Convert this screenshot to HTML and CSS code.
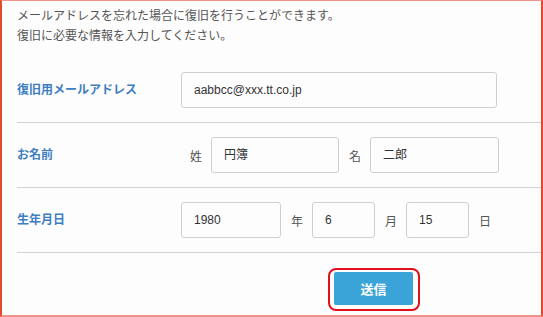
FILE: index.html
```html
<!DOCTYPE html>
<html lang="ja">
<head>
<meta charset="utf-8">
<title>復旧</title>
<link rel="stylesheet" href="styles.css">
</head>
<body>
<div class="frame">
  <div class="intro">
    <p>メールアドレスを忘れた場合に復旧を行うことができます。</p>
    <p>復旧に必要な情報を入力してください。</p>
  </div>
  <div class="row">
    <div class="label">復旧用メールアドレス</div>
    <div class="controls">
      <div class="field w-email">aabbcc@xxx.tt.co.jp</div>
    </div>
  </div>
  <div class="row">
    <div class="label">お名前</div>
    <div class="controls">
      <span class="unit lead">姓</span>
      <div class="field w-name1">円簿</div>
      <span class="unit">名</span>
      <div class="field w-name2">二郎</div>
    </div>
  </div>
  <div class="row">
    <div class="label">生年月日</div>
    <div class="controls">
      <div class="field w-year">1980</div>
      <span class="unit">年</span>
      <div class="field w-md">6</div>
      <span class="unit">月</span>
      <div class="field w-md">15</div>
      <span class="unit">日</span>
    </div>
  </div>
  <div class="actions">
    <span class="highlight"><button class="submit" type="button">送信</button></span>
  </div>
</div>
</body>
</html>
```

FILE: styles.css
```css
* { box-sizing: border-box; }
html, body {
  margin: 0;
  padding: 0;
  background: #fdfdfd;
}
body {
  font-family: "Liberation Sans", "Noto Sans CJK JP", sans-serif;
  font-size: 12px;
  color: #555;
}
.frame {
  width: 543px;
  height: 317px;
  border-left: 2px solid #e8472f;
  border-right: 2px solid #e8472f;
  border-top: 1px solid #ef948a;
  border-bottom: 2px solid #ef948a;
  padding: 5px 0 0 15px;
  background: #fdfdfd;
}
.intro {
  margin-bottom: 12px;
}
.intro p {
  margin: 0;
  line-height: 20px;
  color: #555;
}
.row {
  display: flex;
  align-items: center;
  padding: 14px 0;
  border-bottom: 1px solid #d2d2d2;
}
.label {
  width: 164px;
  flex: none;
  font-weight: bold;
  color: #3d7dc1;
  padding-bottom: 3px;
}
.controls {
  display: flex;
  align-items: center;
}
.field {
  height: 36px;
  line-height: 34px;
  padding: 0 12px;
  border: 1px solid #cfcfcf;
  border-radius: 3px;
  background: #fdfdfe;
  color: #333;
  font-size: 12px;
}
.w-email { width: 316px; }
.w-name1 { width: 128px; }
.w-name2 { width: 129px; }
.w-year { width: 100px; }
.w-md { width: 63px; }
.unit {
  color: #555;
  padding: 0 9px 0 10px;
}
.unit.lead {
  padding-left: 9px;
}
.actions {
  padding: 15px 0 0 311px;
}
.highlight {
  display: inline-flex;
  border: 2px solid #e2101c;
  border-radius: 8px;
  padding: 2px 5px 4px 4px;
}
.submit {
  width: 79px;
  height: 33px;
  border: none;
  border-radius: 2px;
  background: #3aa4d9;
  color: #fff;
  font-family: "Liberation Sans", "Noto Sans CJK JP", sans-serif;
  font-size: 13px;
  font-weight: bold;
  padding: 0;
}
```
